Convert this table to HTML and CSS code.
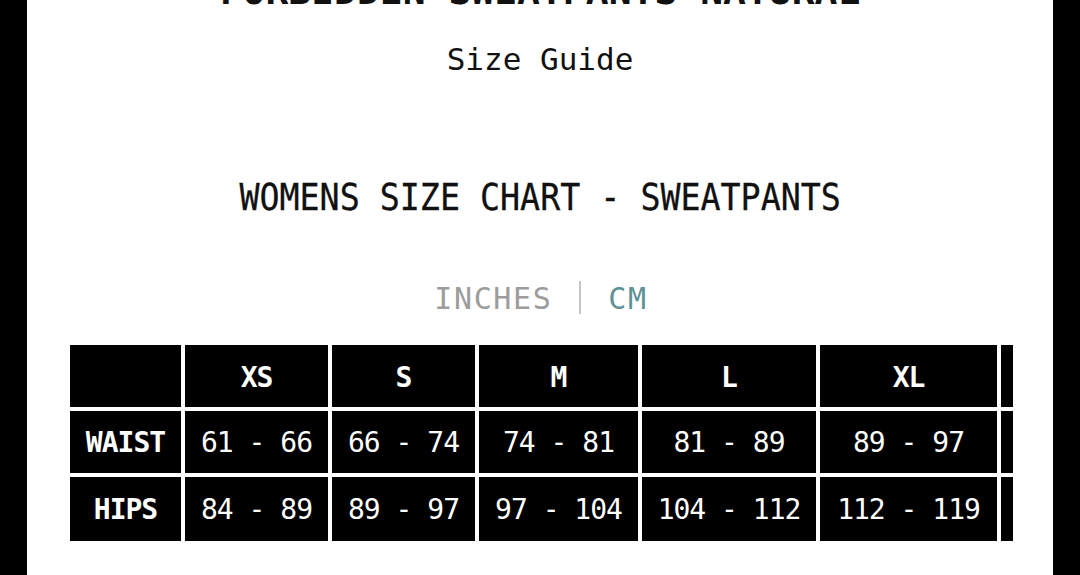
FILE: index.html
```html
<!DOCTYPE html>
<html lang="en">
<head>
<meta charset="utf-8">
<title>Size Guide</title>
<link rel="stylesheet" href="styles.css">
</head>
<body>
<div class="panel">
  <h1 class="product">FORBIDDEN SWEATPANTS NATURAL</h1>
  <h2 class="guide">Size Guide</h2>
  <div class="chart-title"><span class="narrow">WOMENS SIZE CHART - SWEATPANTS</span></div>
  <div class="units">
    <span class="unit unit-off">INCHES</span><span class="divider"></span><span class="unit unit-on">CM</span>
  </div>
  <div class="table-wrap">
    <table class="chart">
      <colgroup>
        <col class="c0"><col class="c1"><col class="c2"><col class="c3"><col class="c4"><col class="c5"><col class="c6">
      </colgroup>
      <tr class="r-head">
        <th></th><th>XS</th><th>S</th><th>M</th><th>L</th><th>XL</th><th></th>
      </tr>
      <tr class="r-body">
        <th>WAIST</th><td>61 - 66</td><td>66 - 74</td><td>74 - 81</td><td>81 - 89</td><td>89 - 97</td><td></td>
      </tr>
      <tr class="r-last">
        <th>HIPS</th><td>84 - 89</td><td>89 - 97</td><td>97 - 104</td><td>104 - 112</td><td>112 - 119</td><td></td>
      </tr>
    </table>
  </div>
</div>
</body>
</html>
```

FILE: styles.css
```css
html, body {
  margin: 0;
  padding: 0;
  background: #000;
  height: 575px;
  overflow: hidden;
}

.panel {
  margin: 0 27px;
  height: 575px;
  background: #fff;
  overflow: hidden;
  font-family: "DejaVu Sans Mono", "Liberation Mono", monospace;
  color: #111;
  text-align: center;
}

.product {
  margin: -28px 0 0;
  font-size: 38px;
  line-height: 38px;
  font-weight: bold;
  white-space: nowrap;
}

.guide {
  margin: 33px 0 0;
  font-size: 31px;
  line-height: 32px;
  font-weight: normal;
  color: #111;
}

.chart-title {
  margin-top: 104px;
  font-size: 37px;
  line-height: 37px;
  white-space: nowrap;
}

.narrow {
  display: inline-block;
  transform: scaleX(0.9);
  -webkit-text-stroke: 0.3px #111;
}

.units {
  margin-top: 68px;
  height: 30px;
  font-size: 30px;
  line-height: 30px;
  display: flex;
  justify-content: center;
  align-items: center;
}

.unit {
  letter-spacing: 1.6px;
}

.unit-off {
  color: #9c9c9c;
}

.unit-on {
  color: #5e9296;
  margin-right: -2px;
}

.divider {
  display: inline-block;
  width: 2px;
  height: 33px;
  background: #c4c4c4;
  margin: -3px 27px 0 27px;
}

.table-wrap {
  margin: 27px 0 0 39px;
  width: 947px;
  height: 204px;
  overflow: hidden;
}

.chart {
  table-layout: fixed;
  width: 1089px;
  border-collapse: separate;
  border-spacing: 4px;
  font-size: 28px;
  letter-spacing: -1px;
  color: #fff;
}

.c0 { width: 111px; }
.c1 { width: 143px; }
.c2 { width: 143px; }
.c3 { width: 159px; }
.c4 { width: 174px; }
.c5 { width: 177px; }
.c6 { width: 150px; }

.chart th,
.chart td {
  background: #000;
  padding: 0;
  text-align: center;
  vertical-align: middle;
  white-space: nowrap;
  overflow: hidden;
}

.chart th {
  font-weight: bold;
}

.chart td {
  font-weight: normal;
}

.r-head th {
  height: 60px;
  padding-top: 2px;
}

.r-body th,
.r-body td {
  height: 62px;
}

.r-last th,
.r-last td {
  height: 64px;
}
```
